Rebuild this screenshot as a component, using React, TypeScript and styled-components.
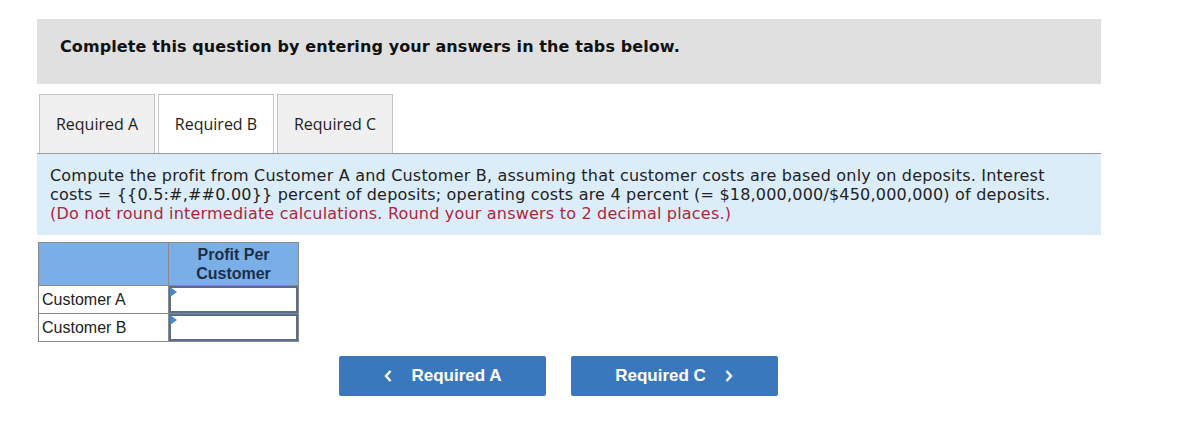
import React from "react";
import styled, { createGlobalStyle } from "styled-components";

const GlobalStyle = createGlobalStyle`
	body {
		margin: 0;
		background: #ffffff;
	}
`;

const rows = ["Customer A", "Customer B"];

export default function App() {
	return (
		<Page>
			<GlobalStyle />
			<Instructions>
				Complete this question by entering your answers in the tabs below.
			</Instructions>
			<TabBar>
				<Tab>Required A</Tab>
				<Tab active>Required B</Tab>
				<Tab>Required C</Tab>
			</TabBar>
			<Question>
				Compute the profit from Customer A and Customer B, assuming that
				customer costs are based only on deposits. Interest
				<br />
				costs = {"{{0.5:#,##0.00}}"} percent of deposits; operating costs are 4
				percent (= $18,000,000/$450,000,000) of deposits.
				<Hint>
					(Do not round intermediate calculations. Round your answers to 2
					decimal places.)
				</Hint>
			</Question>
			<Table>
				<thead>
					<tr>
						<HeadCell />
						<HeadCell>
							Profit Per
							<br />
							Customer
						</HeadCell>
					</tr>
				</thead>
				<tbody>
					{rows.map((r) => (
						<tr key={r}>
							<LabelCell>{r}</LabelCell>
							<InputCell>
								<Marker />
								<Input />
							</InputCell>
						</tr>
					))}
				</tbody>
			</Table>
			<Nav>
				<NavButton>
					<Chevron viewBox="0 0 10 14">
						<path d="M7.5 2 L3 7 L7.5 12" />
					</Chevron>
					Required A
				</NavButton>
				<NavButton>
					Required C
					<Chevron viewBox="0 0 10 14">
						<path d="M2.5 2 L7 7 L2.5 12" />
					</Chevron>
				</NavButton>
			</Nav>
		</Page>
	);
}

const Page = styled.div`
	width: 1064px;
	padding: 19px 0 0 37px;
	font-family: "DejaVu Sans", Verdana, sans-serif;
`;

const Instructions = styled.div`
	height: 65px;
	box-sizing: border-box;
	background: #e0e0e0;
	padding: 18px 0 0 23px;
	font-size: 16px;
	letter-spacing: 0.1px;
	font-weight: bold;
	color: #111;
`;

const TabBar = styled.div`
	display: flex;
	gap: 3px;
	margin-top: 10px;
	padding-left: 2px;
`;

const Tab = styled.div<{ active?: boolean }>`
	width: 116px;
	height: 59px;
	box-sizing: border-box;
	display: flex;
	align-items: center;
	justify-content: center;
	border: 1px solid #c4c4c4;
	border-bottom: none;
	background: ${(p) => (p.active ? "#ffffff" : "#f0f0f0")};
	font-family: "Open Sans", sans-serif;
	font-size: 16px;
	color: #222;
	margin-bottom: ${(p) => (p.active ? "-1px" : "0")};
	position: relative;
	z-index: ${(p) => (p.active ? 1 : 0)};
`;

const Question = styled.div`
	background: #dcedfa;
	border-top: 1px solid #9a9a9a;
	padding: 12px 12px 12px 13px;
	font-size: 16px;
	letter-spacing: 0.2px;
	line-height: 19px;
	color: #222;
	white-space: nowrap;
`;

const Hint = styled.div`
	color: #b0243a;
`;

const Table = styled.table`
	margin: 7px 0 0 1px;
	border-collapse: collapse;
	font-family: "Liberation Sans", Arial, sans-serif;
	font-size: 16px;
`;

const HeadCell = styled.th`
	background: #7aaee6;
	border: 1px solid #8a8a8a;
	width: 129px;
	height: 42px;
	padding: 0;
	font-size: 16px;
	color: #1c2e4a;
	line-height: 19px;
`;

const LabelCell = styled.td`
	border: 1px solid #8a8a8a;
	height: 27px;
	padding: 0 3px;
	color: #222;
`;

const InputCell = styled.td`
	border: 1px solid #8a8a8a;
	padding: 0;
	position: relative;
`;

const Input = styled.div`
	height: 27px;
	box-sizing: border-box;
	border: 2px solid #566d8c;
	background: #fff;
`;

const Marker = styled.span`
	position: absolute;
	left: 1px;
	top: 1px;
	width: 0;
	height: 0;
	border-top: 5px solid transparent;
	border-bottom: 5px solid transparent;
	border-left: 7px solid #4a86c8;
`;

const Nav = styled.div`
	display: flex;
	gap: 25px;
	margin: 14px 0 0 302px;
`;

const NavButton = styled.button`
	width: 207px;
	height: 40px;
	display: flex;
	align-items: center;
	justify-content: center;
	gap: 18px;
	border: none;
	border-radius: 2px;
	background: #3a78be;
	color: #fff;
	font-family: "Liberation Sans", Arial, sans-serif;
	font-size: 17px;
	font-weight: bold;
`;

const Chevron = styled.svg`
	width: 10px;
	height: 14px;
	fill: none;
	stroke: #fff;
	stroke-width: 2.4;
`;
